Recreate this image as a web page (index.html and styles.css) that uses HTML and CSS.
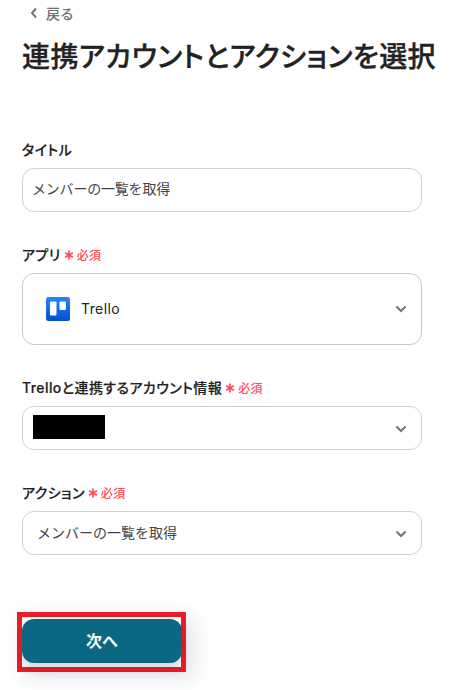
FILE: index.html
```html
<!DOCTYPE html>
<html lang="ja">
<head>
<meta charset="utf-8">
<title>連携アカウントとアクションを選択</title>
<link rel="stylesheet" href="styles.css">
</head>
<body>
<main class="page">
  <a class="back"><svg class="back-icon" viewBox="0 0 8 12"><path d="M6 1.5 2 6l4 4.5"/></svg><span>戻る</span></a>
  <h1 class="title">連携アカウントとアクションを選択</h1>
  <form class="form">
    <div class="field">
      <label class="label">タイトル</label>
      <div class="box box-input"><span class="value-tight">メンバーの一覧を取得</span></div>
    </div>
    <div class="field">
      <label class="label">アプリ<span class="required"><svg class="star" viewBox="0 0 10 10"><path d="M5 .5v9M1.1 2.75l7.8 4.5M8.9 2.75l-7.8 4.5"/></svg>必須</span></label>
      <div class="box box-app">
        <svg class="app-icon" viewBox="0 0 24 24"><defs><linearGradient id="g" x2="0" y2="1"><stop stop-color="#2684ff"/><stop offset="1" stop-color="#0052cc"/></linearGradient></defs><rect width="24" height="24" rx="2.5" fill="url(#g)"/><rect x="4" y="4.5" width="6.5" height="14" rx="1" fill="#fff"/><rect x="13.5" y="4.5" width="6.5" height="8.5" rx="1" fill="#fff"/></svg>
        <span class="app-name">Trello</span>
        <svg class="chevron" viewBox="0 0 12 8"><path d="m1.5 1.5 4.5 4.5 4.5-4.5"/></svg>
      </div>
    </div>
    <div class="field">
      <label class="label">Trelloと連携するアカウント情報<span class="required"><svg class="star" viewBox="0 0 10 10"><path d="M5 .5v9M1.1 2.75l7.8 4.5M8.9 2.75l-7.8 4.5"/></svg>必須</span></label>
      <div class="box box-input"><span class="mask"></span><svg class="chevron chevron-low" viewBox="0 0 12 8"><path d="m1.5 1.5 4.5 4.5 4.5-4.5"/></svg></div>
    </div>
    <div class="field">
      <label class="label">アクション<span class="required"><svg class="star" viewBox="0 0 10 10"><path d="M5 .5v9M1.1 2.75l7.8 4.5M8.9 2.75l-7.8 4.5"/></svg>必須</span></label>
      <div class="box box-select">メンバーの一覧を取得<svg class="chevron chevron-low" viewBox="0 0 12 8"><path d="m1.5 1.5 4.5 4.5 4.5-4.5"/></svg></div>
    </div>
    <div class="highlight"><button class="next" type="button">次へ</button></div>
  </form>
</main>
</body>
</html>
```
FILE: styles.css
```css
* { box-sizing: border-box; }
body { margin: 0; min-height: 690px; background: #fff; color: #222; font-family: Inter, "Noto Sans CJK JP", sans-serif; overflow: hidden; }
.page { padding: 3px 0 0 22px; }
.back { display: flex; align-items: center; gap: 8px; height: 20px; padding-left: 8px; font-size: 14px; font-weight: 500; color: #707070; }
.back-icon { width: 8px; height: 12px; }
.back-icon path, .chevron path { fill: none; stroke: #757575; stroke-width: 2; }
.title { margin: 14px 0 62px; font-size: 28px; line-height: 40px; font-weight: 500; white-space: nowrap; font-feature-settings: "palt"; letter-spacing: .4px; -webkit-text-stroke: .35px #222; }
.field { display: flex; flex-direction: column; width: 400px; margin-bottom: 32px; }
.label { display: flex; align-items: center; height: 20px; font-size: 14px; font-weight: 500; margin-bottom: 9px; white-space: nowrap; font-feature-settings: "palt"; letter-spacing: .42px; -webkit-text-stroke: .2px #222; }
.required { display: flex; align-items: center; margin-left: 3px; gap: 3px; font-size: 12px; font-weight: 500; color: #ff4d59; -webkit-text-stroke: 0; }
.star { width: 10px; height: 10px; margin-top: 2px; }
.star path { fill: none; stroke: #ff4d59; stroke-width: 1.7; }
.box { display: flex; align-items: center; height: 44px; padding: 0 14px 2px 10px; border: 1px solid #cdd0d8; border-radius: 12px; font-size: 14px; color: #444; }
.box-app { height: 72px; padding: 0 14px 0 23px; border-color: #c8c8c8; }
.box-select { padding-left: 14px; }
.value-tight { letter-spacing: -.2px; margin: 0 0 2px -1px; }
.app-icon { width: 24px; height: 24px; margin-right: 11px; }
.app-name { color: #222; letter-spacing: .4px; margin-bottom: 1px; }
.chevron { width: 12px; height: 8px; margin-left: auto; }
.chevron-low { margin-top: 4px; }
.mask { width: 72px; height: 24px; background: #000; }
.highlight { width: 169px; height: 60px; margin: 57px 0 0 -5px; border: 5px solid #ed1c24; box-shadow: 8px 6px 20px rgba(30,40,80,.12); }
.next { display: block; width: 160px; height: 44px; margin: 2px 0 0; padding: 0 0 2px; border: 0; border-radius: 12px; background: #0b6882; color: #fff; font: 700 16px Inter, "Noto Sans CJK JP", sans-serif; box-shadow: 0 6px 8px rgba(30,40,80,.18); }
```
